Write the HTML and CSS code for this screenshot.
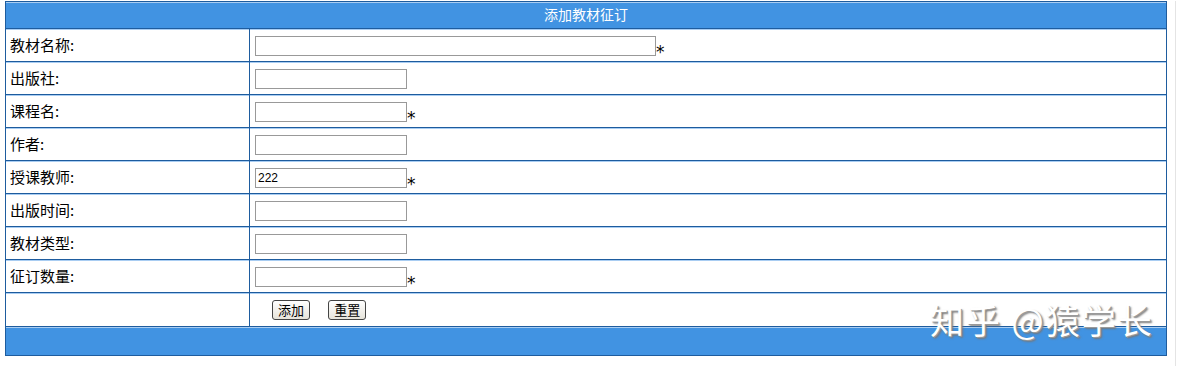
FILE: index.html
```html
<!DOCTYPE html>
<html lang="zh-CN">
<head>
    <meta charset="UTF-8">
    <title>添加教材征订</title>
    <link rel="stylesheet" href="styles.css">
</head>
<body>
    <div class="page">
        <table class="form-table">
            <tr>
                <th colspan="2" class="title">添加教材征订</th>
            </tr>
            <tr>
                <td class="label">教材名称:</td>
                <td class="field"><input type="text" class="input-long"><span class="req">*</span></td>
            </tr>
            <tr>
                <td class="label">出版社:</td>
                <td class="field"><input type="text" class="input"></td>
            </tr>
            <tr>
                <td class="label">课程名:</td>
                <td class="field"><input type="text" class="input"><span class="req">*</span></td>
            </tr>
            <tr>
                <td class="label">作者:</td>
                <td class="field"><input type="text" class="input"></td>
            </tr>
            <tr>
                <td class="label">授课教师:</td>
                <td class="field"><input type="text" class="input" value="222"><span class="req">*</span></td>
            </tr>
            <tr>
                <td class="label">出版时间:</td>
                <td class="field"><input type="text" class="input"></td>
            </tr>
            <tr>
                <td class="label">教材类型:</td>
                <td class="field"><input type="text" class="input"></td>
            </tr>
            <tr>
                <td class="label">征订数量:</td>
                <td class="field"><input type="text" class="input"><span class="req">*</span></td>
            </tr>
            <tr>
                <td class="label"></td>
                <td class="buttons">
                    <button type="submit" class="btn">添加</button>
                    <button type="reset" class="btn">重置</button>
                </td>
            </tr>
            <tr>
                <td colspan="2" class="footer"></td>
            </tr>
        </table>
        <div class="watermark">知乎 @猿学长</div>
    </div>
</body>
</html>
```

FILE: styles.css
```css
body {
    margin: 0;
    background: #ffffff;
    font-family: "Noto Sans CJK SC", "DejaVu Sans", sans-serif;
    font-size: 14px;
    color: #000000;
}
.page {
    position: relative;
    width: 1176px;
    height: 366px;
    border-right: 1px solid #e4e4e4;
    box-sizing: border-box;
}
.form-table {
    margin: 1px 0 0 5px;
    width: 1162px;
    border-collapse: collapse;
    border: 1px solid #1e5c9e;
}
.form-table td,
.form-table th {
    border: 1px solid #1e5c9e;
    box-shadow: inset 0 1px 0 #a9cdf2;
    padding: 0;
}
.title {
    height: 26px;
    background: #4193e2;
    color: #ffffff;
    font-weight: normal;
    font-size: 14px;
    line-height: 24px;
    text-align: center;
    vertical-align: top;
}
.label {
    width: 239px;
    height: 32px;
    padding-left: 4px !important;
    font-size: 15px;
    line-height: 20px;
    vertical-align: middle;
}
.field {
    height: 32px;
    padding-left: 5px !important;
}
.input,
.input-long {
    height: 20px;
    width: 152px;
    box-sizing: border-box;
    border: 1px solid #999999;
    padding: 0 2px;
    font-family: "Liberation Sans", sans-serif;
    font-size: 12px;
    vertical-align: middle;
}
.input-long {
    width: 401px;
}
.req {
    font-family: "DejaVu Sans", sans-serif;
    font-size: 17px;
    vertical-align: -8px;
    line-height: 10px;
}
.buttons {
    height: 33px;
    padding-left: 22px !important;
}
.btn {
    height: 20px;
    padding: 0 5px;
    margin-right: 15px;
    font-family: "Noto Sans CJK SC", sans-serif;
    font-size: 13px;
    line-height: 16px;
    background: linear-gradient(#ffffff, #e6e3da);
    border: 1px solid #444444;
    border-radius: 3px;
}
.footer {
    height: 28px;
    background: #4193e2;
}
.watermark {
    position: absolute;
    left: 930px;
    top: 294px;
    font-size: 34px;
    color: #ffffff;
    letter-spacing: 2px;
    text-shadow: 1px 1px 0 #9a9a9a, 2px 2px 2px #777777;
}
```
